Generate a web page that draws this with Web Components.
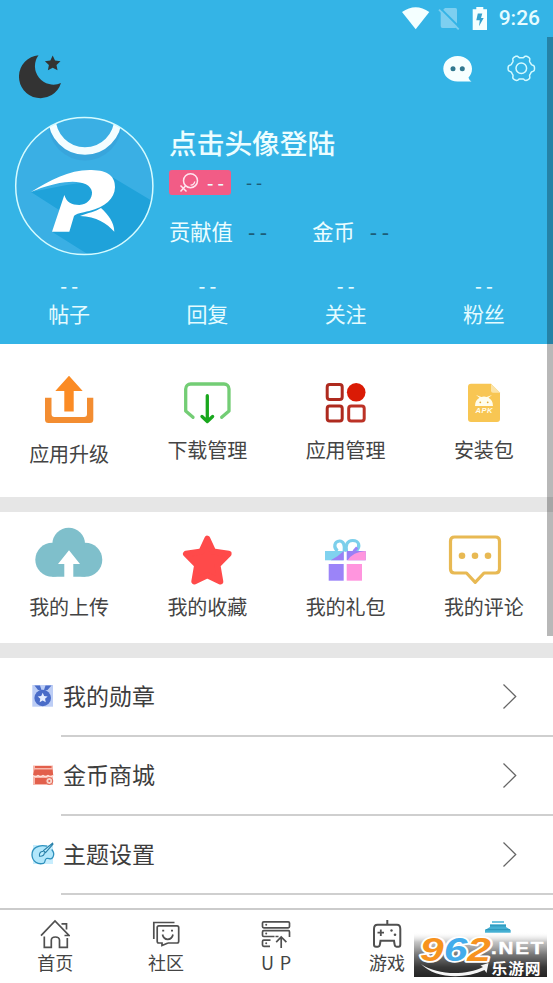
<!DOCTYPE html>
<html lang="zh-CN">
<head>
<meta charset="utf-8">
<title>个人中心</title>
<style>
html,body{margin:0;padding:0;background:#fff}
body{width:553px;height:983px;overflow:hidden;font-family:"Noto Sans CJK SC",sans-serif}
</style>
</head>
<body>
<profile-page></profile-page>
<script>
// Each icon: [viewBox, markup]; drawn at one unit per pixel.
function gearPath(cx, cy) {
  const p = [];
  for (let i = 0; i < 120; i++) {
    const a = i / 120 * Math.PI * 2;
    const w = Math.cos(6 * a);
    const r = 11.9 + 1.3 * Math.tanh(2.2 * w) / Math.tanh(2.2);
    p.push((cx + r * Math.cos(a)).toFixed(2) + ' ' + (cy + r * Math.sin(a)).toFixed(2));
  }
  return 'M' + p.join('L') + 'z';
}
const STAR = (cx, cy, R, r) => Array.from({length: 10}, (_, i) => {
  const a = -Math.PI / 2 + i * Math.PI / 5, q = i % 2 ? r : R;
  return (cx + q * Math.cos(a)).toFixed(2) + ',' + (cy + q * Math.sin(a)).toFixed(2);
}).join(' ');

const ICONS = {
  wifi: ['401 6 30 25', '<path fill="#f4ffff" d="M402 12Q415.700 2.500 429.300 12L415.700 29.300z"/>'],
  sim: ['438 6 22 25', '<path fill="#7dcff0" d="M445 8h10.500q1.500 0 1.500 1.500V26q0 2-2 2H442.500q-1.800 0-1.800-2V12.300z"/><path stroke="#34b4e6" stroke-width="2" d="M440.500 8.500L460 28"/><path stroke="#7dcff0" stroke-width="1.700" d="M439 9.700L458.700 29.300"/>'],
  battery: ['472 6 16 25', '<path fill="#f4ffff" d="M476.300 7h7v2.200h3.700V30h-14.300V9.200h3.600z"/><path fill="#34a2ce" d="M477.800 13.500h4.500l-1.300 4.500h2.700l-4.700 8.200.8-6h-3.500z"/>'],
  moon: ['18 53 46 46', `<path fill="#333" d="M38.500 55.200A21.500 21.500 0 1 0 61 83A18.500 18.500 0 0 1 38.500 55.200z"/><polygon fill="#333" points="${STAR(52.7, 63.7, 8.2, 4)}"/>`],
  chat: ['442 54 32 30', '<path fill="#f6ffff" d="M457.700 56C465.800 56 472 61.500 472 68.800C472 72.500 470.500 75.500 468.500 77.500C469 79.500 470 80.500 471.500 81.500H457.500C449.500 81.500 443.300 76 443.300 68.800C443.300 61.500 449.600 56 457.700 56z"/><circle cx="453" cy="68.700" r="2.500" fill="#31788f"/><circle cx="462.300" cy="68.700" r="2.500" fill="#31788f"/>'],
  gear: ['506 54 30 30', `<path fill="none" stroke="#d4faff" stroke-width="1.500" stroke-linejoin="round" d="${gearPath(521.3, 68.3)}"/><circle cx="521.300" cy="68.300" r="5.300" fill="none" stroke="#d4faff" stroke-width="1.500"/>`],
  avatar: ['14 116 141 141', `<defs><clipPath id="c"><circle cx="84.300" cy="186" r="68.500"/></clipPath></defs>
    <g clip-path="url(#c)"><rect x="14" y="116" width="141" height="141" fill="#3aafe4"/>
    <circle cx="85" cy="124" r="33" fill="none" stroke="#3799d3" stroke-width="7" opacity=".45"/>
    <circle cx="85" cy="118" r="33" fill="#3aafe4" stroke="#f4fdff" stroke-width="7.500"/>
    <g transform="translate(0 105) scale(.33333)"><path fill="#1fa2da" d="M93 261L182 318L156 380L275 455H470V296L340 218L200 240z"/>
    <path fill="#fff" d="M93 261C150 225 210 193 275 195C325 196 346 215 345 247C344 282 315 306 268 318C245 323 228 326 222 333L208 380H156L193 270C200 292 215 300 238 300C262 300 277 280 276 262C274 235 235 226 195 232C150 238 115 252 93 261zM240 333C262 325 290 318 303 309C325 330 342 350 343 380C320 355 290 335 240 333z"/></g></g>
    <circle cx="84.300" cy="186" r="68.600" fill="none" stroke="#d5fbff" stroke-width="1.500"/>`],
  gender: ['178 170 22 24', '<g fill="none" stroke="#ffe4ef"><circle cx="190.500" cy="179.700" r="7" stroke-width="1.500"/><path stroke-width="1.500" d="M185.500 185L180.500 190.500M180.500 184.500l6 6"/><path stroke-width="1.300" d="M190.500 184.200Q194.300 184 194.700 180.500"/></g>'],
  upgrade: ['29 344 80 92', '<path fill="#fb8b24" d="M69 375.700L82.700 391H73.700V411.500H64.300V391H55.300z"/><path fill="#f38d31" d="M45 397.700H51.500V414Q51.500 417 54.500 417H84Q87 417 87 414V397.700H93.300V419.500Q93.300 423 89.800 423H48.500Q45 423 45 419.500z"/>'],
  download: ['167 344 80 92', '<g fill="none" stroke-linecap="round" stroke-linejoin="round"><path stroke="#73cd75" stroke-width="3.300" d="M193 417.300L185.700 411V389a5 5 0 0 1 5-5H224a5 5 0 0 1 5 5V411L221.700 417.300"/><path stroke="#19a71d" stroke-width="3.300" d="M207.300 395.700V421M202 416.500L207.300 421.500L212.600 416.500"/></g>'],
  apps: ['306.300 344 80 92', '<circle cx="356.500" cy="392.300" r="9.300" fill="#da1b05"/><g fill="none" stroke="#ae2a1e" stroke-width="3"><rect x="327.500" y="384.500" width="15" height="15" rx="2.500"/><rect x="327.500" y="406" width="15" height="15" rx="2.500"/><rect x="349" y="406" width="15.500" height="15" rx="2.500" stroke="#bc3226"/></g>'],
  apk: ['444 344 80 92', '<path fill="#f8c653" d="M471 383.700H491L500 392.700V419Q500 422 497 422H471Q468 422 468 419V386.700Q468 383.700 471 383.700z"/><path fill="#fbe3a6" d="M491 383.700L500 392.700H493Q491 392.700 491 390.700z"/><path fill="#fffdec" d="M475 406Q475 400 479.500 397.700L476 395L481.300 397Q484 396 486.700 397L492 395L488.500 397.700Q493 400 493 406z"/><circle cx="480.300" cy="402.300" r=".9" fill="#e5ad34"/><circle cx="487.700" cy="402.300" r=".9" fill="#e5ad34"/><text x="484" y="413.200" text-anchor="middle" font-family="Liberation Sans,sans-serif" font-size="7.500" font-weight="700" font-style="italic" fill="#fffdec" textLength="17">APK</text>'],
  cloud: ['29 512 80 81', '<g fill="#7fbfcb"><circle cx="52.300" cy="559.700" r="17"/><circle cx="85.300" cy="559.700" r="17"/><circle cx="68.700" cy="544" r="16.300"/><path d="M52.300 550H85.300V576.700H52.300z"/></g><path fill="#fff" d="M69 550.300L80 564H73.300V577H64.300V564H58z"/>'],
  star: ['167 512 80 81', '<polygon fill="#ff4a4a" stroke="#ff4a4a" stroke-width="6" stroke-linejoin="round" points="207.3,538.700 213.2,551.500 228.6,553.800 217.5,565.200 220.300,581.500 207.3,575.300 194.300,581.500 197.1,565.200 186,553.800 201.4,551.500"/>'],
  gift: ['306.300 512 80 81', '<g fill="none" stroke="#7ccfeb" stroke-width="3.200"><path d="M344.500 551.500C345.500 545 343.500 540.800 339.800 541C334.500 541.300 333.500 547.500 337.800 551"/><path d="M346.800 551.500C345.500 545 347.500 540.500 353 540.500C359.500 540.500 361 546.500 356.500 551"/></g><path stroke="#9b84f8" stroke-width="3" d="M357.500 547.500L354 551.500"/><path fill="#80d2ef" d="M325.300 551H344V560.300H325.300z"/><path fill="#9b80f5" d="M344 551V560.300H331Q338 557 344 551zM347 551H366V560.300H347z"/><path fill="#ff95de" d="M366 551V560.300H348Q353 552 366 551z"/><path fill="#9b84f8" d="M329 564H344V580.700H329z"/><path fill="#ff95de" d="M347 564H362.300V580.700H347z"/>'],
  comment: ['444 512 80 81', '<path fill="none" stroke="#e8b953" stroke-width="3.200" stroke-linejoin="round" d="M454.500 537H495.500Q499.500 537 499.500 541V569Q499.500 573 495.500 573H484L475.200 582.300L466.500 573H454.500Q450.500 573 450.500 569V541Q450.500 537 454.500 537z"/><g fill="#e8b953"><circle cx="462" cy="555.800" r="3.300"/><circle cx="475" cy="555.800" r="3.300"/><circle cx="488" cy="555.800" r="3.300"/></g>'],
  medal: ['30 684 26 25', `<path fill="#bccdf5" d="M32.300 685H53V706.700H32.300z"/><path fill="#4a6cc8" d="M34.500 685.500H40L41.500 690H38zM51.500 685.500H45.500L44 690H47.500z"/><circle cx="42.700" cy="698" r="8.300" fill="#4a6cc8"/><polygon fill="#e6eeff" points="${STAR(42.7, 698, 5.2, 2.5)}"/>`],
  shop: ['30 763 26 25', '<path fill="#f7b9ad" d="M33 765.500H53V785H33z"/><path fill="#e2604c" d="M35 766H51.500V768H35zM34.500 769.500H52.500L53.300 775.500H33zM35 778H51V784H35z"/><path fill="none" stroke="#ffe3dc" stroke-width="1.100" d="M33 775.500q2.500 2.500 5 0q2.500 2.500 5 0q2.500 2.500 5 0q2.500 2.500 5 0"/><circle cx="49.300" cy="781" r="3.500" fill="#f8d3ca" stroke="#e2604c"/><circle cx="49.300" cy="781" r="1.100" fill="#e2604c"/>'],
  palette: ['30 842 26 25', '<path fill="#c7edfd" d="M33 845H53V864H33z"/><path fill="#b2e7fb" stroke="#2e91bd" stroke-width="1.300" d="M47 846.200C39 844 31.700 848 32 855C32.300 861.500 38 865 43.500 863.300C46 862.500 44 859.700 46.500 858.500C49 857.300 51 861 53 857C54.300 854.500 53.500 851.500 51.700 849.500"/><path fill="#bdefff" stroke="#287fa8" stroke-width="1.100" d="M52.500 843.200L43.500 850.500L45.500 852.700L53 844.200zM43.300 851.500C40.500 851 39 853.500 39.500 856.200C42.800 856.500 45 854.500 44.200 852.500"/>'],
  chevron: ['501 682 18 29', '<path fill="none" stroke="#666" stroke-width="1.300" d="M503.500 684.500L515.700 696.500L503.500 708.500"/>'],
  home: ['40 910 30 39', '<g fill="none" stroke="#505050" stroke-width="1.700"><path d="M41 935.700L55 921L69 935.500H64.500M61.500 923.800H66.500V929.500M44.300 936.500V947.300H51.300V940Q51.500 937 55.300 937Q59.300 937 59.500 940V947.300H67.300V938"/></g>'],
  community: ['151 910 30 39', '<g fill="none" stroke="#505050" stroke-width="1.700"><path d="M153.800 939V922.500H174.500"/><path d="M168 943H177Q178.700 943 178.700 941.300V927.500Q178.700 925.800 177 925.800H158.800Q157.200 925.800 157.200 927.500V941.300Q157.200 943 158.800 943H162V945.500L168 943M162.500 934.500Q163.500 939.300 167.700 939.300Q172 939.300 173 934.500"/><path d="M162.200 930.700H164.200M171 930.700H173"/></g>'],
  up: ['261.500 910 30 39', '<g fill="none" stroke="#505050" stroke-width="1.700"><rect x="263" y="921.800" width="27" height="6" rx="1.300"/><path d="M275 936.500H264.300Q263 936.500 263 935.200V932Q263 930.700 264.300 930.700H289Q290 930.700 290 932V937M279 936.500H276M270.500 946.300H264.300Q263 946.300 263 945V941.500Q263 940.200 264.300 940.200H271M281.700 948V937.200M276.700 942.200L281.700 937L286.900 942.200"/></g><g fill="#505050"><circle cx="266.700" cy="924.800" r="1"/><circle cx="266.700" cy="933.600" r="1"/><circle cx="266.700" cy="943.200" r="1"/></g>'],
  game: ['372 910 30 39', '<g fill="none" stroke="#505050" stroke-width="2"><path d="M387.300 920V924.500M377.500 924.700H397Q400.300 924.700 400.300 929V944.500Q400.300 946.700 398.500 946.700H396.500Q394.800 946.700 394.500 944L394 940.800H380.500L380 944Q379.700 946.700 378 946.700H376Q374 946.700 374 944.500V929Q374 924.700 377.500 924.700z"/><path stroke-width="1.800" d="M380.800 929.500V936M377.500 932.700H384"/></g><circle cx="391.500" cy="930.500" r="1.200" fill="#505050"/><circle cx="395" cy="934.700" r="1.300" fill="#505050"/>'],
  mine: ['483 910 30 39', '<path fill="#45b0d3" d="M492 921.300H504V922.700H492zM490 924.300H506V927L510.700 930V932.700H485V930L490 927z"/><path stroke="#2b94b8" d="M485.500 929.700H510M490 925.800H506"/>'],
  watermark: ['414 932 133 45', `<defs><linearGradient id="g" x2="0" y2="1"><stop offset="0" stop-color="#fff" stop-opacity="0"/><stop offset=".22" stop-color="#bbb" stop-opacity=".85"/><stop offset=".5" stop-color="#777"/><stop offset=".78" stop-color="#383838"/><stop offset="1" stop-color="#242424"/></linearGradient></defs>
    <path fill="url(#g)" d="M414 932H547V977H414z"/>
    <path fill="#f5f5f5" d="M421 964C437 975 465 976 483 967L480.500 965.500L488.500 963L486.500 973L484.500 970C463 980 434 978 421 964z"/>
    <g font-family="Liberation Sans,sans-serif" font-weight="700" font-style="italic" stroke-linejoin="round" font-size="33">
    <text x="420" y="960.500" paint-order="stroke" stroke="#fff" stroke-width="3.500" textLength="71" lengthAdjust="spacingAndGlyphs"><tspan fill="#f7931e">9</tspan><tspan fill="#43aceb">6</tspan><tspan fill="#f7931e">2</tspan></text></g>
    <text x="491" y="954" font-family="Liberation Sans,sans-serif" font-size="17" font-weight="700" fill="#fff" stroke="#fff" stroke-width=".5" textLength="54" lengthAdjust="spacingAndGlyphs" letter-spacing="1.500">.NET</text>
    <text x="491.500" y="973.500" font-family="Noto Sans CJK SC,sans-serif" font-size="14.500" font-weight="700" fill="#fff" textLength="50" lengthAdjust="spacingAndGlyphs" letter-spacing=".8">乐游网</text>`]
};

customElements.define('ui-icon', class extends HTMLElement {
  connectedCallback() {
    const [vb, body] = ICONS[this.getAttribute('name')];
    const [, , w, h] = vb.split(' ');
    this.attachShadow({mode: 'open'}).innerHTML =
      `<style>:host{display:block;flex:none}svg{display:block}</style><svg width="${w}" height="${h}" viewBox="${vb}">${body}</svg>`;
  }
});

function define(tag, html) {
  const t = document.createElement('template');
  t.innerHTML = html;
  customElements.define(tag, class extends HTMLElement {
    constructor() {
      super();
      this.attachShadow({mode: 'open'}).append(t.content.cloneNode(true));
    }
  });
}

define('status-bar', `<style>
  :host{display:flex;height:37px;padding-right:13px;justify-content:flex-end;align-items:center;box-sizing:border-box}
  ui-icon+ui-icon{margin-left:7px}ui-icon:nth-of-type(3){margin-left:12px}
  time{font:500 21px/37px Roboto,sans-serif;color:#e6fcff;margin-left:11px}</style>
  <ui-icon name="wifi"></ui-icon><ui-icon name="sim"></ui-icon><ui-icon name="battery"></ui-icon><time>9:26</time>`);

define('stat-item', `<style>
  :host{display:flex;flex-direction:column;align-items:center;flex:1;color:#e4fbff}
  b{font-weight:500;font-size:19px;line-height:20px}
  span{font-size:21px;line-height:30px;margin-top:3px}</style>
  <b>- -</b><span><slot></slot></span>`);

define('profile-header', `<style>
  :host{display:block;height:344px;background:#34b4e6;color:#ecfdff}
  .tools{display:flex;height:79px;padding:16px 17px 0 18px;box-sizing:border-box;align-items:flex-start}
  .tools .end{display:flex;gap:32px;margin:1px 0 0 auto}
  .who{display:flex;height:160px}
  .pic{margin-left:14px}
  .info{margin-left:14px;padding-top:6px}
  h1{margin:0;font-size:27.700px;line-height:40px;font-weight:500}
  .row{display:flex;align-items:center}
  .tag{display:flex;align-items:center;width:62px;height:25px;border-radius:3px;background:#f25c86;box-sizing:border-box;padding-left:9px;font-size:18px;font-weight:500;line-height:22px;margin-top:8px}
  .tag span{margin:-2px 0 0 7px}
  .dark{color:#1c5d78;font-weight:500}
  .counts{margin-top:20px;font-size:21.300px;line-height:32px}
  .stats{display:flex;margin-top:-1px}</style>
  <status-bar></status-bar>
  <div class="tools"><ui-icon name="moon"></ui-icon><div class="end"><ui-icon name="chat"></ui-icon><ui-icon name="gear"></ui-icon></div></div>
  <div class="who"><ui-icon class="pic" name="avatar"></ui-icon>
    <div class="info"><h1>点击头像登陆</h1>
      <div class="row"><div class="tag"><ui-icon name="gender"></ui-icon><span>- -</span></div><span class="dark" style="font-size:17px;margin:5px 0 0 15px">- -</span></div>
      <div class="row counts"><span>贡献值</span><span class="dark" style="margin-left:15px;font-size:20.500px">- -</span><span style="margin-left:45px">金币</span><span class="dark" style="margin-left:15px;font-size:20.500px">- -</span></div>
    </div></div>
  <div class="stats"><stat-item>帖子</stat-item><stat-item>回复</stat-item><stat-item>关注</stat-item><stat-item>粉丝</stat-item></div>`);

define('tile-row', `<style>:host{display:grid;grid-template-columns:repeat(4,1fr);box-sizing:border-box;border-bottom:15px solid #e6e6e6}</style><slot></slot>`);

define('tile-item', `<style>
  :host{display:flex;flex-direction:column;align-items:center;color:#444}
  span{font-size:20px;line-height:28px;margin-top:var(--drop,0)}</style>
  <slot name="icon"></slot><span><slot></slot></span>`);

define('menu-row', `<style>
  :host{display:block;height:79px}
  .line{display:flex;align-items:center;height:77px;padding:0 34px 0 30px}
  .t{font-size:23px;line-height:34px;color:#3d3d3d;margin:-3px 0 0 7px;flex:1}
  .rule{height:2px;background:#cfcfcf;margin-left:61px}</style>
  <div class="line"><slot name="icon"></slot><span class="t"><slot></slot></span><ui-icon name="chevron"></ui-icon></div><div class="rule"></div>`);

define('nav-item', `<style>
  :host{display:flex;flex-direction:column;align-items:center;flex:1;color:#444}
  span{font-size:18px;line-height:26px;white-space:pre}</style>
  <slot name="icon"></slot><span><slot></slot></span>`);

define('tab-bar', `<style>:host{display:flex;height:75px;box-sizing:border-box;border-top:2px solid #cbcbcb;background:#fff}</style><slot></slot>`);

define('profile-page', `<style>
  :host{display:flex;flex-direction:column;position:relative;width:553px;height:983px;background:#fff;overflow:hidden}
  profile-header,tile-row,tab-bar{flex:none}
  .list{flex:1;min-height:0}
  .thumb{position:absolute;right:0;top:37px;width:6px;height:599px;background:rgba(0,0,0,.28)}
  .mark{position:absolute;left:414px;top:932px}</style>
  <profile-header></profile-header>
  <tile-row style="height:168px">
    <tile-item style="--drop:4px"><ui-icon slot="icon" name="upgrade"></ui-icon>应用升级</tile-item>
    <tile-item><ui-icon slot="icon" name="download"></ui-icon>下载管理</tile-item>
    <tile-item><ui-icon slot="icon" name="apps"></ui-icon>应用管理</tile-item>
    <tile-item><ui-icon slot="icon" name="apk"></ui-icon>安装包</tile-item>
  </tile-row>
  <tile-row style="height:146px">
    <tile-item><ui-icon slot="icon" name="cloud"></ui-icon>我的上传</tile-item>
    <tile-item><ui-icon slot="icon" name="star"></ui-icon>我的收藏</tile-item>
    <tile-item><ui-icon slot="icon" name="gift"></ui-icon>我的礼包</tile-item>
    <tile-item><ui-icon slot="icon" name="comment"></ui-icon>我的评论</tile-item>
  </tile-row>
  <div class="list">
    <menu-row><ui-icon slot="icon" name="medal"></ui-icon>我的勋章</menu-row>
    <menu-row><ui-icon slot="icon" name="shop"></ui-icon>金币商城</menu-row>
    <menu-row><ui-icon slot="icon" name="palette"></ui-icon>主题设置</menu-row>
  </div>
  <tab-bar>
    <nav-item><ui-icon slot="icon" name="home"></ui-icon>首页</nav-item>
    <nav-item><ui-icon slot="icon" name="community"></ui-icon>社区</nav-item>
    <nav-item style="letter-spacing:.8px"><ui-icon slot="icon" name="up"></ui-icon>U P</nav-item>
    <nav-item><ui-icon slot="icon" name="game"></ui-icon>游戏</nav-item>
    <nav-item><ui-icon slot="icon" name="mine"></ui-icon></nav-item>
  </tab-bar>
  <div class="thumb"></div>
  <ui-icon class="mark" name="watermark"></ui-icon>`);
</script>
</body>
</html>
